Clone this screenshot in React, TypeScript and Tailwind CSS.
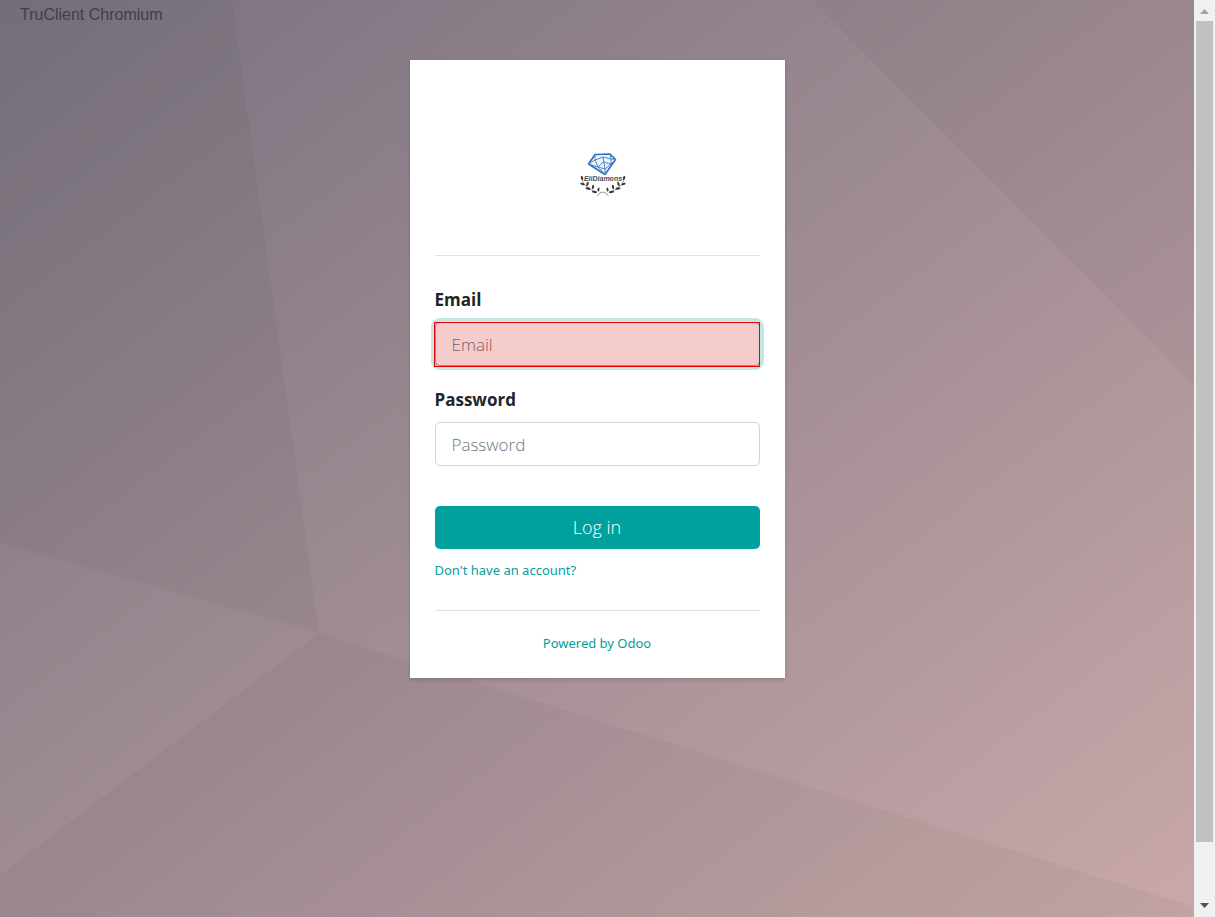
import React from "react";

function Backdrop() {
  return (
    <svg
      className="absolute inset-0 h-full w-full"
      viewBox="0 0 1194 917"
      preserveAspectRatio="none"
      aria-hidden="true"
    >
      <g fill="#000" fillOpacity="0.03">
        <polygon points="0,0 232,0 319,633 0,543" />
        <polygon points="0,875 319,633 1194,907 1194,917 0,917" />
        <polygon points="812,0 1194,0 1194,385" />
      </g>
    </svg>
  );
}

function Logo() {
  return (
    <svg width="84" height="70" viewBox="0 0 84 70" role="img" aria-label="Logo">
      <path d="M28.500 24 L35 14.500 L50 14 L55.500 19.500 L45 34.500 Z" fill="#eef4fb" />
      <g fill="none" stroke="#4d86c8" strokeWidth="1" strokeLinejoin="round">
        <path d="M28.500 24 L35 14.500 L50 14 L55.500 19.500 L45 34.500 Z" stroke="#2f6fbe" strokeWidth="1.600" />
        <path d="M28.500 24 L35 20 L43 17 L51 19 L55.500 19.500" />
        <path d="M35 14.500 L35 20 L38 27 L45 29 L51 24 L51 19 L50 14" />
        <path d="M28.500 24 L38 27 L45 34.500 L45 29 L43 17 M38 27 L43 22 L51 24 L55.500 19.500" />
      </g>
      <text
        x="43"
        y="41"
        textAnchor="middle"
        fill="#4a4a50"
        className="font-['Liberation_Sans',sans-serif] text-[7px] font-bold italic"
      >
        EliDiamons
      </text>
      <g fill="none" stroke="#8a8a8a" strokeWidth="0.900">
        <path d="M37 56 Q43 48 48.500 56" />
        <path d="M22 40 Q25 49 37 52" />
        <path d="M64 40 Q61 49 49 52" />
      </g>
      <g fill="#3c3c3c">
        <ellipse cx="22" cy="38" rx="1.100" ry="2.200" transform="rotate(-20 22 38)" />
        <ellipse cx="22.500" cy="44" rx="2.300" ry="1.100" transform="rotate(20 22.500 44)" />
        <ellipse cx="27.500" cy="44" rx="1.100" ry="2.200" transform="rotate(15 27.500 44)" />
        <ellipse cx="28" cy="48.500" rx="2.500" ry="1.200" transform="rotate(10 28 48.500)" />
        <ellipse cx="33" cy="47" rx="1.100" ry="2.300" transform="rotate(10 33 47)" />
        <ellipse cx="34.500" cy="52" rx="2.500" ry="1.100" transform="rotate(10 34.500 52)" />
        <ellipse cx="38.500" cy="49.500" rx="1" ry="2.100" transform="rotate(10 38.500 49.500)" />
        <ellipse cx="64" cy="38" rx="1.100" ry="2.200" transform="rotate(20 64 38)" />
        <ellipse cx="63.500" cy="44" rx="2.300" ry="1.100" transform="rotate(-20 63.500 44)" />
        <ellipse cx="58.500" cy="44" rx="1.100" ry="2.200" transform="rotate(-15 58.500 44)" />
        <ellipse cx="58" cy="48.500" rx="2.500" ry="1.200" transform="rotate(-10 58 48.500)" />
        <ellipse cx="53" cy="47" rx="1.100" ry="2.300" transform="rotate(-10 53 47)" />
        <ellipse cx="51.500" cy="52" rx="2.500" ry="1.100" transform="rotate(-10 51.500 52)" />
        <ellipse cx="47.500" cy="49.500" rx="1" ry="2.100" transform="rotate(-10 47.500 49.500)" />
      </g>
    </svg>
  );
}

function ScrollTrack() {
  return (
    <div className="flex w-[21px] shrink-0 flex-col items-center bg-[#f1f1f1]" aria-hidden="true">
      <svg className="h-[21px] w-[21px] shrink-0" viewBox="0 0 21 21">
        <path d="M6 14 L10.500 9 L15 14 Z" fill="#a3a3a3" />
      </svg>
      <div className="flex w-full flex-1 flex-col items-center">
        <div className="w-[17px] grow-[821] basis-0 bg-[#c1c1c1]" />
        <div className="grow-[54] basis-0" />
      </div>
      <svg className="h-[21px] w-[21px] shrink-0" viewBox="0 0 21 21">
        <path d="M6 7 L15 7 L10.500 12 Z" fill="#505050" />
      </svg>
    </div>
  );
}

const field =
  "block h-11 w-full rounded-[5px] border bg-white px-4 text-[17px] font-light text-[#495057] outline-none placeholder:text-[#6c757d] placeholder:opacity-100";
const labelText = "block text-[17px] leading-6 font-bold text-[#212529]";

export default function App() {
  return (
    <div className="flex min-h-screen font-['Open_Sans','Noto_Sans',sans-serif]">
      <div className="relative flex-1 bg-[linear-gradient(to_right_bottom,#77717e,#c9a8a9)]">
        <Backdrop />
        <p className="absolute top-[3px] left-5 font-['Liberation_Sans',sans-serif] text-base leading-6 text-[#433d47]">
          TruClient Chromium
        </p>
        <main className="relative mx-auto mt-[60px] w-full max-w-[375px] bg-white p-[25px] shadow-[0_2px_4px_rgba(0,0,0,0.15)]">
          <div className="flex h-[171px] items-center justify-center border-b border-[#dee2e6] pt-[10px] pl-[10px]">
            <Logo />
          </div>
          <form className="pt-8" onSubmit={(e) => e.preventDefault()}>
            <label htmlFor="email" className={labelText}>
              Email
            </label>
            <div className="relative mt-[10px]">
              <input
                id="email"
                type="text"
                placeholder="Email"
                className={field + " border-[#5fc9c6] shadow-[0_0_0_4px_#bfe7e6]"}
              />
              <div className="pointer-events-none absolute top-0 right-0 -bottom-px -left-px border border-[#f00000] bg-[#c80000]/20" />
            </div>
            <label htmlFor="password" className={labelText + " mt-[22px]"}>
              Password
            </label>
            <input
              id="password"
              type="password"
              placeholder="Password"
              className={field + " mt-[10px] border-[#ced4da]"}
            />
            <button
              type="submit"
              className="mt-10 block h-[43px] w-full rounded-[5px] bg-[#00a09d] text-[18px] font-light text-white"
            >
              Log in
            </button>
            <a href="#signup" className="mt-[11px] block w-fit font-['Noto_Sans',sans-serif] text-[13px] leading-5 text-[#00a09d]">
              Don't have an account?
            </a>
          </form>
          <footer className="mt-[30px] border-t border-[#dee2e6] pt-[22px] text-center font-['Noto_Sans',sans-serif] text-[13px] leading-5 text-[#00a09d]">
            <a href="#odoo">Powered by Odoo</a>
          </footer>
        </main>
      </div>
      <ScrollTrack />
    </div>
  );
}
